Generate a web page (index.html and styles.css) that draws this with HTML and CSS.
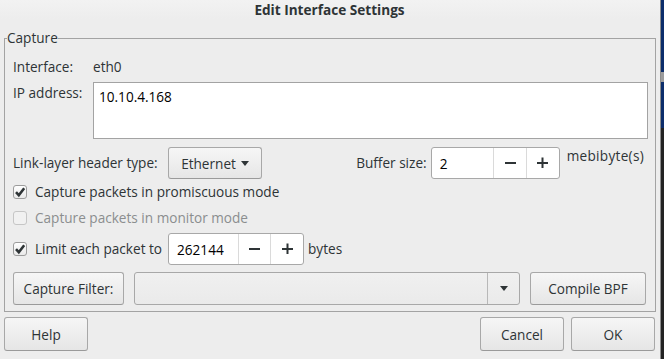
FILE: index.html
```html
<!DOCTYPE html>
<html>
<head>
<meta charset="utf-8">
<link rel="stylesheet" href="styles.css">
</head>
<body>
<div class="screen">
  <div class="dialog">
    <div class="titlebar">Edit Interface Settings</div>
    <fieldset class="capture">
      <legend>Capture</legend>
      <div class="capture-body">
        <div class="row row-iface">
          <span class="lbl lbl-col">Interface:</span>
          <span class="val">eth0</span>
        </div>
        <div class="row row-ip">
          <span class="lbl lbl-col lbl-top">IP address:</span>
          <div class="textarea">10.10.4.168</div>
        </div>
        <div class="row row-link">
          <span class="lbl lbl-link">Link-layer header type:</span>
          <button class="btn btn-ether">Ethernet <svg class="arrow" width="8" height="5" viewBox="0 0 8 5"><path d="M0 0H8L4 5Z" fill="#2e3436"/></svg></button>
          <span class="spacer"></span>
          <span class="lbl">Buffer size:</span>
          <div class="spin spin-buf">
            <span class="spin-value">2</span>
            <span class="spin-btn"><svg width="11" height="11" viewBox="0 0 11 11"><rect x="0" y="5" width="11" height="2" fill="#2e3436"/></svg></span>
            <span class="spin-btn"><svg width="11" height="11" viewBox="0 0 11 11"><rect x="0" y="5" width="11" height="2" fill="#2e3436"/><rect x="4.5" y="0.5" width="2" height="11" fill="#2e3436"/></svg></span>
          </div>
          <span class="lbl unit-top">mebibyte(s)</span>
        </div>
        <div class="row row-cb">
          <span class="cb cb-on"><svg width="14" height="14" viewBox="0 0 14 14"><path d="M3 7.2 L5.8 10.2 L11.2 3.2" fill="none" stroke="#2e3436" stroke-width="2.6"/></svg></span>
          <span class="lbl">Capture packets in promiscuous mode</span>
        </div>
        <div class="row row-cb2">
          <span class="cb cb-off"></span>
          <span class="lbl disabled">Capture packets in monitor mode</span>
        </div>
        <div class="row row-limit">
          <span class="cb cb-on"><svg width="14" height="14" viewBox="0 0 14 14"><path d="M3 7.2 L5.8 10.2 L11.2 3.2" fill="none" stroke="#2e3436" stroke-width="2.6"/></svg></span>
          <span class="lbl">Limit each packet to</span>
          <div class="spin spin-limit">
            <span class="spin-value">262144</span>
            <span class="spin-btn"><svg width="11" height="11" viewBox="0 0 11 11"><rect x="0" y="5" width="11" height="2" fill="#2e3436"/></svg></span>
            <span class="spin-btn"><svg width="11" height="11" viewBox="0 0 11 11"><rect x="0" y="5" width="11" height="2" fill="#2e3436"/><rect x="4.5" y="0.5" width="2" height="11" fill="#2e3436"/></svg></span>
          </div>
          <span class="lbl">bytes</span>
        </div>
        <div class="row row-filter">
          <button class="btn btn-filter">Capture Filter:</button>
          <div class="combo">
            <span class="combo-entry"></span>
            <span class="combo-btn"><svg width="8" height="5" viewBox="0 0 8 5"><path d="M0 0H8L4 5Z" fill="#2e3436"/></svg></span>
          </div>
          <button class="btn btn-bpf">Compile BPF</button>
        </div>
      </div>
    </fieldset>
    <div class="actions">
      <button class="btn btn-action">Help</button>
      <span class="spacer"></span>
      <button class="btn btn-action">Cancel</button>
      <button class="btn btn-action">OK</button>
    </div>
  </div>
  <div class="behind"></div>
</div>
</body>
</html>
```
FILE: styles.css
```css
* { box-sizing: border-box; }
html, body { margin: 0; padding: 0; }
body {
  font-family: "Open Sans", "DejaVu Sans", sans-serif;
  font-size: 13.6px;
  color: #2e3436;
  background: #1b1b1b;
}
.screen {
  display: flex;
  width: 664px;
  height: 359px;
  overflow: hidden;
}
.dialog {
  width: 661px;
  height: 359px;
  background: #ededed;
  border-right: 1px solid #8c8c8c;
  display: flex;
  flex-direction: column;
}
.behind {
  width: 3px;
  height: 359px;
  background: linear-gradient(#0c2d6b 0, #0c2d6b 72px, #9c9c9c 72px, #9c9c9c 82px, #0c2d6b 82px, #0c2d6b 128px, #222 128px, #222 100%);
}
.titlebar {
  height: 19px;
  line-height: 19px;
  text-align: center;
  font-weight: bold;
  font-size: 13.6px;
  background: linear-gradient(#f2f2f2, #ededed);
  padding-right: 1px;
}
.capture {
  margin: 11px 4px 0 4px;
  padding: 0 7px 6px 2px;
  border: 1px solid #a3a3a3;
  min-width: 0;
}
.capture legend {
  padding: 0;
  line-height: 16px;
}
.capture-body {
  padding-left: 6px;
  display: flex;
  flex-direction: column;
}
.row {
  display: flex;
  align-items: center;
}
.lbl { white-space: nowrap; line-height: 18px; }
.lbl-col { width: 80px; flex: none; }
.lbl-top { align-self: flex-start; padding-top: 2px; }
.val { line-height: 18px; }
.row-iface { height: 18px; margin-top: 12px; }
.row-ip { height: 57px; margin-top: 6px; }
.textarea {
  flex: 1;
  height: 57px;
  background: #fff;
  border: 1px solid #a3a3a3;
  padding: 5px 5px;
  line-height: 18px;
  color: #000;
}
.row-link { height: 32px; margin-top: 8px; }
.lbl-link { width: 155px; flex: none; }
.spacer { flex: 1; }
.btn {
  font: inherit;
  color: #2e3436;
  border: 1px solid #a8a8a8;
  border-bottom-color: #9a9a9a;
  border-radius: 3px;
  background: linear-gradient(#f6f6f6, #e6e6e6);
  padding: 0;
  display: flex;
  align-items: center;
  justify-content: center;
}
.btn-ether { width: 94px; height: 32px; gap: 5px; }
.arrow { margin-top: 1px; }
.spin {
  display: flex;
  height: 32px;
  border: 1px solid #a8a8a8;
  border-radius: 3px;
  background: #fff;
  margin-left: 4px;
}
.spin-value {
  display: flex;
  align-items: center;
  padding-left: 8px;
  color: #000;
}
.spin-btn {
  width: 33px;
  border-left: 1px solid #dadada;
  display: flex;
  align-items: center;
  justify-content: center;
}
.spin-btn svg { margin-top: -1px; }
.spin-buf .spin-value { width: 62px; }
.spin-buf { width: 129px; }
.spin-limit { width: 136px; margin-left: 6px; margin-right: 4px; }
.spin-limit .spin-value { width: 69px; }
.unit-top { align-self: flex-start; margin-left: 7px; margin-right: 4px; letter-spacing: 0.3px; }
.cb {
  width: 14px;
  height: 14px;
  border: 1px solid #9c9c9c;
  border-radius: 3px;
  background: linear-gradient(#ffffff, #e9e9e9);
  margin-right: 8px;
  flex: none;
  position: relative;
}
.cb svg { position: absolute; left: -1px; top: -1px; }
.cb-off { border-color: #c6c6c6; background: #f1f1f1; }
.disabled { color: #8b8e8f; }
.row-cb { height: 18px; margin-top: 4px; }
.row-cb2 { height: 18px; margin-top: 8px; }
.row-limit { height: 32px; margin-top: 6px; }
.row-filter { height: 33px; margin-top: 7px; padding-right: 2px; }
.btn-filter { width: 111px; height: 33px; }
.combo {
  flex: 1;
  height: 33px;
  margin: 0 10px;
  border: 1px solid #a8a8a8;
  border-radius: 3px;
  background: linear-gradient(#f0f0f0, #eaeaea);
  display: flex;
}
.combo-entry { flex: 1; }
.combo-btn {
  width: 32px;
  border-left: 1px solid #b8b8b8;
  display: flex;
  align-items: center;
  justify-content: center;
}
.btn-bpf { width: 116px; height: 33px; }
.actions {
  display: flex;
  margin: 5px 5px 0 4px;
  gap: 7px;
}
.btn-action { width: 84px; height: 34px; }
```
